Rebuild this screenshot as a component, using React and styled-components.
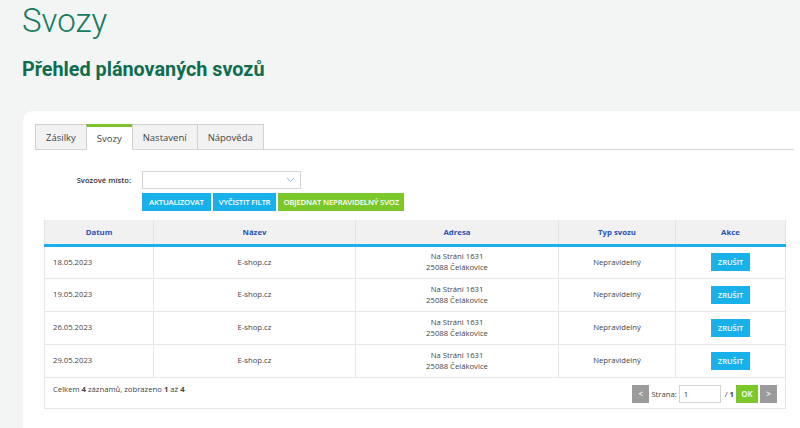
import React from 'react'
import styled, { createGlobalStyle } from 'styled-components'

const GlobalStyle = createGlobalStyle`
  html, body {
    margin: 0;
    padding: 0;
    background: #f3f4f4;
    overflow: hidden;
  }
  * {
    box-sizing: border-box;
  }
`

const Page = styled.div`
  width: 800px;
  height: 428px;
  padding: 1px 0 0 22px;
  font-family: 'Open Sans', 'Noto Sans', sans-serif;
  overflow: hidden;
`

const Title = styled.h1`
  margin: 0;
  font-family: Roboto, sans-serif;
  font-weight: 300;
  font-size: 33px;
  line-height: 40px;
  color: #157c5e;
`

const Subtitle = styled.h2`
  margin: 15px 0 0;
  font-family: Roboto, sans-serif;
  font-weight: 700;
  font-size: 19.8px;
  line-height: 28px;
  color: #0f6d4f;
`

const Panel = styled.section`
  margin: 27px 0 0 1px;
  width: 790px;
  height: 340px;
  background: #fff;
  border-radius: 10px 0 0 0;
  padding: 13px 0 0 12px;
`

const Tabs = styled.div`
  display: flex;
  width: 759px;
  border-bottom: 1px solid #d6d6d6;
`

const Tab = styled.div`
  padding: 0 10px;
  display: flex;
  align-items: center;
  font-size: 9.5px;
  color: #444;
  background: ${(p) => (p.$active ? '#fff' : '#f2f2f2')};
  border: 1px solid #d0d0d0;
  border-top: ${(p) => (p.$active ? '3px solid #7cc22f' : '1px solid #d0d0d0')};
  border-bottom: none;
  margin-right: -1px;
  margin-bottom: ${(p) => (p.$active ? '-1px' : '0')};
  height: ${(p) => (p.$active ? '26px' : '25px')};
`

const TabContent = styled.div`
  width: 759px;
  padding: 21px 9px 0;
`

const FilterRow = styled.div`
  display: flex;
  align-items: center;
  gap: 11px;
`

const Label = styled.label`
  width: 87px;
  text-align: right;
  font-size: 7.6px;
  font-weight: 600;
  color: #333;
`

const Select = styled.div`
  width: 159px;
  height: 18px;
  border: 1px solid #d4d4d4;
  background: #fff;
  display: flex;
  align-items: center;
  justify-content: flex-end;
  padding-right: 5px;
`

const ButtonRow = styled.div`
  display: flex;
  gap: 2px;
  margin: 4px 0 0 98px;
`

const ActionButton = styled.button`
  height: 18px;
  border: none;
  padding: 0 ${(p) => p.$pad}px;
  background: ${(p) => (p.$green ? '#7cc72a' : '#18b1ea')};
  color: #fff;
  font-family: 'Open Sans', sans-serif;
  font-size: 7.8px;
  font-weight: 600;
  letter-spacing: -0.2px;
  white-space: nowrap;
`

const Table = styled.table`
  margin-top: 9px;
  width: 741px;
  border-collapse: collapse;
  font-size: 7.7px;
  color: #444;
  table-layout: fixed;
`

const Th = styled.th`
  height: 25px;
  background: #f1f1f1;
  color: #2653b6;
  font-weight: 700;
  font-size: 7.8px;
  border-left: 1px solid #e3e3e3;
  border-right: 1px solid #e3e3e3;
  border-bottom: 3px solid #1cb0ea;
  padding: 0;
`

const Td = styled.td`
  height: 33px;
  border: 1px solid #e6e6e6;
  text-align: ${(p) => (p.$left ? 'left' : 'center')};
  padding: ${(p) => (p.$left ? '0 0 0 8px' : '0')};
  line-height: 11px;
`

const CancelButton = styled.button`
  height: 18px;
  width: 39px;
  border: none;
  background: #18b1ea;
  color: #fff;
  font-family: 'Open Sans', sans-serif;
  font-size: 7.5px;
  font-weight: 600;
  padding: 0;
`

const FooterCell = styled.td`
  height: 31px;
  border: 1px solid #e6e6e6;
  padding: 6px 8px 0;
  vertical-align: top;
`

const FooterInner = styled.div`
  display: flex;
  align-items: flex-start;
  justify-content: space-between;
`

const Summary = styled.span`
  color: #444;
  line-height: 11px;
  b {
    font-weight: 700;
  }
`

const Pager = styled.div`
  display: flex;
  align-items: center;
  gap: 2px;
  margin-top: 1px;
  color: #444;
`

const PagerButton = styled.button`
  width: ${(p) => (p.$ok ? '22px' : '17px')};
  height: 18px;
  border: none;
  padding: 0;
  background: ${(p) => (p.$ok ? '#7cc72a' : '#9b9b9b')};
  color: #fff;
  font-family: 'Open Sans', sans-serif;
  font-size: 8px;
  font-weight: 600;
`

const PageInput = styled.div`
  width: 42px;
  height: 18px;
  border: 1px solid #d4d4d4;
  background: #fff;
  padding: 0 4px;
  display: flex;
  align-items: center;
  color: #333;
  margin-right: 2px;
`

const rows = ['18.05.2023', '19.05.2023', '26.05.2023', '29.05.2023']

export default function App() {
  return (
    <Page>
      <GlobalStyle />
      <Title>Svozy</Title>
      <Subtitle>Přehled plánovaných svozů</Subtitle>
      <Panel>
        <Tabs>
          <Tab>Zásilky</Tab>
          <Tab $active>Svozy</Tab>
          <Tab>Nastavení</Tab>
          <Tab>Nápověda</Tab>
        </Tabs>
        <TabContent>
          <FilterRow>
            <Label>Svozové místo:</Label>
            <Select>
              <svg width="9" height="6" viewBox="0 0 9 6">
                <path d="M1 1l3.5 3.5L8 1" fill="none" stroke="#8cc6e6" strokeWidth="1" />
              </svg>
            </Select>
          </FilterRow>
          <ButtonRow>
            <ActionButton $pad={7}>AKTUALIZOVAT</ActionButton>
            <ActionButton $pad={6}>VYČISTIT FILTR</ActionButton>
            <ActionButton $green $pad={5}>OBJEDNAT NEPRAVIDELNÝ SVOZ</ActionButton>
          </ButtonRow>
          <Table>
            <colgroup>
              <col style={{ width: 109 }} />
              <col style={{ width: 202 }} />
              <col style={{ width: 203 }} />
              <col style={{ width: 117 }} />
              <col style={{ width: 110 }} />
            </colgroup>
            <thead>
              <tr>
                <Th>Datum</Th>
                <Th>Název</Th>
                <Th>Adresa</Th>
                <Th>Typ svozu</Th>
                <Th>Akce</Th>
              </tr>
            </thead>
            <tbody>
              {rows.map((d) => (
                <tr key={d}>
                  <Td $left>{d}</Td>
                  <Td>E-shop.cz</Td>
                  <Td>
                    Na Stráni 1631
                    <br />
                    25088 Čelákovice
                  </Td>
                  <Td>Nepravidelný</Td>
                  <Td>
                    <CancelButton>ZRUŠIT</CancelButton>
                  </Td>
                </tr>
              ))}
              <tr>
                <FooterCell colSpan={5}>
                  <FooterInner>
                    <Summary>
                      Celkem <b>4</b> záznamů, zobrazeno <b>1</b> až <b>4</b>
                    </Summary>
                    <Pager>
                      <PagerButton>&lt;</PagerButton>
                      <span>Strana:</span>
                      <PageInput>1</PageInput>
                      <span>/ <b>1</b></span>
                      <PagerButton $ok>OK</PagerButton>
                      <PagerButton>&gt;</PagerButton>
                    </Pager>
                  </FooterInner>
                </FooterCell>
              </tr>
            </tbody>
          </Table>
        </TabContent>
      </Panel>
    </Page>
  )
}
